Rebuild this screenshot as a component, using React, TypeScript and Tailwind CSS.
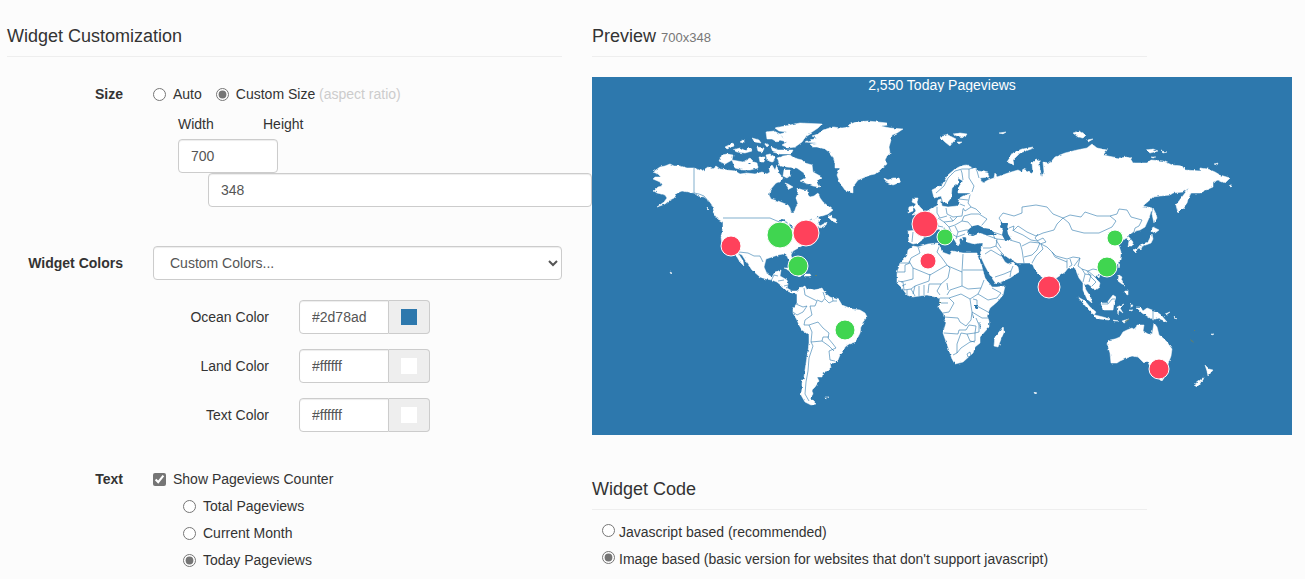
import React from "react";

/* Coastlines, in map units */
const LAND = [
  // North and Central America
  "M653 172L660 167L665 166L670 164L674 166L680 166L687 168L694 168L702 171L708 167L712 169L716 166L720 169L727 170L735 171L740 174L747 173L755 174L762 172L767 174L770 172L769 168L772 165L775 170L777 165L778 172L783 178L780 182L776 183L770 190L769 195L771 199L778 201L788 205L790 208L791 213L794 213L796 207L798 204L796 198L798 193L797 188L803 190L807 190L808 195L810 197L814 196L818 193L820 198L823 202L828 206L833 210L828 214L822 216L817 217L810 222L816 218L821 219L818 222L820 226L827 222L826 225L820 228L817 226L815 233L807 243L800 247L793 251L791 255L793 262L790 263L787 256L783 254L778 255L772 257L766 259L764 267L767 274L772 277L775 272L781 270L780 276L787 280L788 284L787 288L792 291L797 291L800 288L802 292L797 294L792 293L787 291L783 287L777 282L772 280L766 279L760 277L752 270L747 263L742 255L738 253L743 261L744 266L740 262L737 257L733 253L725 250L722 245L721 238L723 227L723 222L718 219L715 215L712 205L708 200L704 197L698 196L694 193L688 192L682 191L677 193L674 198L670 200L665 204L657 207L664 202L667 198L665 195L657 193L654 191L658 187L662 186L660 182L653 179L655 177L661 177L658 174Z",
  // South America
  "M797 294L801 288L805 286L807 290L810 288L814 290L822 288L825 293L830 297L839 300L842 305L852 309L860 310L865 313L867 317L863 322L861 327L860 333L858 337L855 342L849 344L845 347L843 352L840 355L838 360L835 363L830 363L831 368L828 371L823 372L822 377L817 377L819 381L817 384L815 387L812 390L813 394L811 397L812 400L816 404L811 405L805 402L801 395L802 389L802 383L804 377L805 370L807 357L809 343L809 335L802 330L799 325L797 320L793 313L793 309L797 303Z",
  // Greenland
  "M805 142L811 140L817 138L812 136L818 134L823 130L833 127L842 128L850 127L848 125L856 122L867 121L878 122L887 123L888 125L880 126L890 128L903 129L897 133L892 135L891 140L889 147L890 153L887 156L885 160L887 164L883 167L880 170L875 174L870 175L863 178L858 180L855 184L853 187L853 193L848 191L845 190L840 183L837 175L840 168L835 168L835 163L833 157L829 152L825 149L818 147L813 147L810 144L817 143Z",
  // Canadian Arctic
  "M775 128L790 125L800 123L822 124L818 128L812 132L807 135L802 142L795 147L788 148L782 145L787 142L780 140L783 137L780 134L787 132L779 131Z",
  "M766 132L774 131L780 134L783 138L777 142L772 139L767 139Z",
  "M771 147L778 150L793 150L791 154L780 154L773 152Z",
  "M777 158L783 156L790 155L794 158L802 160L805 163L812 165L813 172L822 177L817 181L820 187L813 186L808 184L800 181L805 178L804 173L797 168L787 167L780 166Z",
  "M784 170L790 170L791 175L787 178L783 176Z M785 183L788 184L793 187L789 189Z M766 155L770 154L775 157L773 162L767 160Z",
  "M722 155L727 154L733 155L732 160L725 164L719 161Z M732 160L743 162L750 158L754 162L757 163L758 168L750 170L743 170L735 168Z M733 150L740 148L746 151L749 147L752 151L745 153L737 152Z M725 147L733 143L734 146L727 149Z M740 142L743 140L743 143Z M752 138L759 140L761 143L755 142Z M757 147L764 148L763 152L758 151Z M759 157L765 157L764 162L760 162Z M764 143L769 145L767 147Z",
  "M828 217L831 215L832 218L836 219L837 223L832 221Z M713 212L718 215L723 220L718 219Z M707 207L709 209L708 210Z",
  // Caribbean and the Falklands
  "M784 268L791 268L797 271L801 273L794 272Z M804 274L810 274L811 276L805 276Z M798 276L801 276L799 277Z M825 397L829 397L826 399Z",
  // Iceland, Svalbard, Arctic islands
  "M884 178L888 180L893 178L899 178L901 182L893 185L886 182Z M940 137L948 135L956 139L953 142L950 146L945 142Z M953 134L960 133L967 134L965 137L957 136Z M957 142L962 142L959 144Z M999 133L1006 132L1003 134Z",
  "M1033 147L1022 149L1013 153L1007 162L1014 165L1013 160L1020 153L1034 148Z M1073 133L1080 131L1086 135L1083 138L1078 137Z M1086 140L1093 139L1088 142Z M1146 150L1153 149L1158 151L1150 153Z M1161 151L1167 152L1163 153Z M1151 157L1156 157L1153 158Z M1214 164L1218 163L1217 165Z M1229 185L1232 185L1231 186Z",
  // Great Britain and Ireland
  "M913 198L918 198L917 203L920 207L924 211L920 214L912 215L916 211L914 207L916 204L912 202Z M909 207L913 206L913 211L908 213Z",
  // Europe and Asia
  "M932 190L942 185L948 175L955 169L961 166L967 165L973 168L979 171L988 173L989 177L980 178L983 183L988 180L994 178L995 173L997 177L1008 173L1018 170L1022 172L1023 169L1033 173L1032 163L1036 159L1039 160L1040 170L1042 177L1044 172L1043 162L1050 163L1055 157L1065 153L1077 150L1087 148L1092 144L1097 148L1107 150L1103 155L1113 157L1120 158L1127 157L1130 158L1133 163L1140 163L1147 163L1151 160L1163 161L1172 165L1182 166L1185 170L1200 171L1200 168L1208 169L1215 172L1220 175L1230 178L1225 183L1218 180L1213 182L1213 187L1206 190L1200 193L1191 193L1188 199L1187 203L1183 208L1178 213L1176 205L1182 197L1189 188L1183 192L1173 193L1170 195L1160 196L1153 197L1143 206L1152 208L1149 218L1145 227L1140 230L1135 231L1128 236L1133 242L1132 246L1128 246L1129 241L1127 238L1122 240L1117 242L1119 246L1121 252L1120 260L1115 267L1107 273L1099 273L1095 277L1100 283L1099 287L1095 290L1092 287L1088 284L1084 285L1086 290L1090 296L1092 303L1087 299L1083 290L1083 283L1079 278L1075 268L1068 268L1065 272L1055 279L1054 288L1053 293L1048 297L1043 285L1041 276L1035 270L1032 263L1025 263L1017 263L1010 259L1004 255L1000 254L1005 262L1008 264L1013 262L1018 267L1019 272L1010 278L996 284L990 275L985 266L980 255L982 249L983 243L980 243L974 244L967 242L966 237L962 237L963 240L959 239L960 243L958 246L954 239L948 233L944 227L943 230L948 235L953 238L950 241L948 238L943 234L939 229L936 230L930 231L923 235L922 240L918 243L913 244L909 242L908 231L918 230L919 225L914 218L924 213L932 208L937 206L938 200L941 199L942 206L948 207L957 206L960 202L958 199L963 196L972 193L958 193L958 188L963 181L958 178L958 183L952 188L951 198L947 203L943 202L941 196L934 198Z",
  // Africa and Madagascar
  "M913 246L918 247L928 244L938 243L940 247L942 252L950 255L952 251L963 253L977 253L978 257L982 267L985 278L992 287L997 287L1005 286L1003 295L997 302L990 308L987 315L989 321L989 327L980 337L980 343L975 347L973 353L963 362L955 364L952 359L948 347L943 333L946 323L943 313L939 308L940 298L935 297L927 295L912 297L907 295L902 288L897 283L897 273L900 263L907 256L908 250Z M1003 327L1004 332L1001 339L998 347L994 346L995 337Z",
  // Japan, Sakhalin, Taiwan, Philippines
  "M1153 227L1159 230L1155 233L1151 231Z M1152 234L1153 239L1151 243L1143 246L1137 249L1140 245L1148 242Z M1134 249L1137 249L1136 253L1133 250Z M1139 248L1142 247L1141 249Z M1153 208L1156 214L1157 218L1154 223L1152 214Z M1118 264L1120 264L1119 268Z M1119 275L1122 277L1121 281L1125 285L1122 284L1118 281Z M1125 291L1128 291L1128 295L1124 293Z M1097 276L1100 275L1099 278Z",
  // Southeast Asia
  "M1078 297L1085 301L1090 307L1096 312L1094 315L1088 309L1083 303Z M1095 315L1103 317L1110 319L1109 320L1100 319L1095 317Z M1101 303L1107 303L1109 300L1113 295L1116 297L1114 303L1113 310L1103 310Z M1117 307L1124 304L1120 308L1123 313L1119 310L1118 314Z M1113 320L1119 321L1114 321Z M1122 321L1129 319L1124 323Z M1131 303L1133 306L1131 307Z M1136 307L1140 307L1143 311L1147 308L1157 312L1161 315L1167 322L1158 318L1153 320L1147 316L1142 313Z M1165 314L1170 312L1166 315Z M1174 316L1177 319L1175 318Z M1129 310L1133 310L1130 311Z",
  // Australia and New Zealand
  "M1107 343L1110 340L1115 339L1120 337L1123 332L1127 330L1132 328L1135 330L1137 325L1144 325L1143 331L1148 334L1152 335L1154 323L1157 327L1159 335L1163 338L1167 342L1172 349L1171 356L1168 364L1163 374L1156 372L1151 369L1147 360L1144 363L1138 357L1132 356L1127 358L1120 361L1117 363L1111 363L1110 353Z M1159 378L1164 378L1162 381L1160 380Z M1205 365L1209 369L1213 370L1208 376L1207 371Z M1204 377L1203 380L1197 387L1194 385L1199 381Z",
  "M1211 334L1214 334L1212 335Z M670 272L672 273L671 274Z M1034 392L1037 393L1035 394Z",
];

/* Lakes and inland seas */
const WATER = [
  "M968 235L969 229L973 226L978 225L984 228L990 229L997 235L987 235L980 233L973 236Z",
  "M1001 223L1008 223L1007 229L1008 234L1011 239L1006 242L1002 235L1003 230L1000 227Z",
  "M777 221L783 219L788 223L784 222Z M785 224L787 224L786 230L784 229Z M789 223L793 227L791 228Z M794 230L799 228L797 230Z",
  "M974 305L978 305L978 309L974 308Z M972 311L974 318L973 318Z M979 321L981 327L980 328Z",
  "M790 171L793 174L790 175Z M748 163L752 163L750 165Z",
];

/* Country borders */
const BORDERS = [
  "M694 168V193L699 194L704 196L709 202L713 208 M723 218H770L777 221L788 225L794 229L803 224L812 219",
  "M739 252L748 253L754 256L760 256L763 262 M771 281L774 275L778 276 M778 281L784 280 M784 286L788 285",
  "M804 288L805 295L811 298L817 301L815 306L810 306L812 315L805 320 M796 304L803 307L807 306L803 312L797 315L793 312 M805 320L804 325L809 325L818 322L823 328L829 333L828 338L833 344L836 348L829 351L830 360L835 361 M809 325L812 332L811 342L822 341L823 337L829 337 M811 342L813 346L809 358L808 371L806 382L805 394L809 401 M822 341L829 346L834 351 M817 300L822 302L825 298L823 292 M825 299L829 303L833 301L832 296 M833 301L837 301",
  // Europe
  "M936 193L944 186L948 178L955 171L962 169L969 169L973 168 M963 180L962 173L961 170 M969 169L969 178L974 186L972 192 M977 171L979 178 M959 199L968 200 M960 204L965 206 M970 195L968 203L971 207L965 211L963 208 M946 208L947 214L953 217L962 216L963 209 M937 207L937 213L940 218L947 216 M938 218L944 222L953 221L957 217 M944 222L949 227L955 225L962 221L968 222L973 228 M955 226L958 232L966 230L970 230 M958 232L956 239 M962 221L964 216L971 214L979 214L987 219L982 225 M971 207L976 209L981 214 M949 227L952 234L957 237L965 234 M913 232L912 242 M919 230L926 233 M937 219L938 226L943 227 M953 221L950 217",
  // Middle East
  "M986 235L997 239L1007 240 M990 231L1002 235 M993 234L995 239 M997 239L996 246L990 248L983 248 M996 246L1001 252L1004 255 M985 254L991 250L1001 256 M996 240L1001 248 M995 277L1004 274L1011 271L1010 277 M1011 271L1013 266",
  // Central and South Asia
  "M1002 223L999 218L1003 213L1014 216L1022 213L1022 207L1036 205L1047 207L1053 214L1063 218L1057 224L1054 230L1043 233L1036 236L1027 232L1018 226L1013 231L1014 226L1009 228 M1014 231L1023 235L1031 240L1037 241L1043 238L1046 242L1040 244L1035 238L1038 234 M1010 240L1020 243L1022 250L1024 263 M1022 246L1030 242L1040 243L1037 250L1032 255L1024 257 M1032 263L1036 256L1043 249L1041 244L1047 247L1052 252L1056 256L1067 259L1073 257L1080 258L1078 266L1082 269L1088 271L1093 269L1098 270 M1052 252L1055 257L1067 262 M1067 260L1067 268 M1070 259L1072 265L1069 267 M1080 258L1074 266 M1082 269L1085 274L1083 282 M1087 271L1091 277L1096 282L1092 286 M1085 274L1091 275L1089 282 M1088 271L1094 276L1099 281",
  // Russia, Mongolia and China
  "M1063 218L1070 215L1081 217L1085 212L1097 216L1110 216L1116 221L1112 227L1099 233L1084 233L1072 230L1069 223Z M1110 216L1117 214L1119 209L1127 210L1131 217L1142 220L1139 226L1135 228L1134 232L1127 237 M1131 239L1129 241",
  // Africa
  "M918 247L920 253L911 258L909 263L900 263 M909 261L913 268L930 275L947 265L942 258L937 252L939 247 M897 272H905V265L910 263 M913 268V279L901 282 M930 274L929 281L915 286L913 294 M947 265L950 268L948 278L941 284H929L928 293 M948 266L962 272L963 254 M963 270H985 M962 272V286L950 290L947 295 M941 284L937 291L940 295 M947 283L948 290 M962 286L968 289L981 288L984 280 M981 288L978 294L988 300L997 298L1001 293L992 288 M978 294L970 299L961 294L949 298L940 298 M970 299L972 312L971 320L966 326L960 322L958 318L944 317 M949 298L954 303L949 312L943 313 M973 299L977 300V306L988 312 M972 312L982 318L989 318 M976 318L979 325V332L975 333L976 326L969 325L966 330L959 330L958 334L944 333 M961 333L967 334L975 333L975 341L970 342L961 348L957 353L957 344L961 333 M967 334L970 341L975 342 M957 353L953 355 M898 281L903 282L904 290L911 289L915 286 M907 290V295 M911 289L915 296 M919 286V296 M924 285V295 M902 286L906 284 M967 354L970 352L971 356L968 357Z M941 303H948",
  // New Guinea and Borneo
  "M1153 310V320 M1102 304L1108 304L1112 299L1115 299",
];

type Spot = { x: number; y: number; r: number; color: string };

const GREEN = "#40d550";
const RED = "#ff415b";

const SPOTS: Spot[] = [
  { x: 780, y: 235, r: 13, color: GREEN },
  { x: 806, y: 233, r: 13, color: RED },
  { x: 731, y: 246, r: 10, color: RED },
  { x: 798, y: 266, r: 10, color: GREEN },
  { x: 845, y: 330, r: 10, color: GREEN },
  { x: 925, y: 224, r: 13, color: RED },
  { x: 945, y: 237, r: 8, color: GREEN },
  { x: 928, y: 261, r: 8, color: RED },
  { x: 1049, y: 287, r: 11, color: RED },
  { x: 1107, y: 267, r: 10, color: GREEN },
  { x: 1115, y: 238, r: 8, color: GREEN },
  { x: 1159, y: 369, r: 10, color: RED },
];

function WorldMap() {
  return (
    <svg viewBox="592 92 700 343" className="block w-full" role="img" aria-label="World map of visitors">
      <defs>
        <filter id="coast" x="0" y="0" width="100%" height="100%" colorInterpolationFilters="sRGB">
          <feTurbulence type="fractalNoise" baseFrequency="0.3" numOctaves="1" seed="4" result="noise" />
          <feDisplacementMap in="SourceGraphic" in2="noise" scale="3" xChannelSelector="R" yChannelSelector="G" />
        </filter>
      </defs>
      <g filter="url(#coast)">
        <rect x="592" y="92" width="700" height="343" fill="none" />
        <path d={LAND.join(" ")} fill="#ffffff" stroke="#ffffff" strokeWidth="0.5" strokeLinejoin="round" />
        <path d={WATER.join(" ")} fill="#2d78ad" />
      </g>
      <path d={BORDERS.join(" ")} fill="none" stroke="#2d78ad" strokeWidth="0.6" strokeLinejoin="round" />
      <path
        d="M1125 321l4-2v1l-3 2zM1190 339l3 2 1 2-3-2zM1194 330h1v1h-1zM815 275h2v1h-2zM939 302h2v1h-2z"
        fill="#5f7f70"
      />
      {SPOTS.map((s) => (
        <circle key={`${s.x}-${s.y}`} cx={s.x} cy={s.y} r={s.r} fill={s.color} stroke="#ffffff" strokeWidth="1" />
      ))}
    </svg>
  );
}

const headingClass = "border-b border-[#eeeeee] pb-[10px] text-lg leading-5";
const inputClass =
  "block h-[34px] border border-[#cccccc] bg-white px-3 text-sm text-[#555555] shadow-[inset_0_1px_1px_rgba(0,0,0,0.075)] outline-none";
const tickClass = "m-0 size-[13px] shrink-0 accent-[#757575]";

function ColorRow({ id, label, value, swatch }: { id: string; label: string; value: string; swatch: string }) {
  return (
    <div className="flex items-center gap-[30px]">
      <label htmlFor={id} className="w-[116px] text-right">
        {label}
      </label>
      <div className="flex">
        <input id={id} defaultValue={value} className={`${inputClass} w-[90px] rounded-l`} />
        <button
          type="button"
          aria-label={`Pick ${label}`}
          className="flex h-[34px] w-[41px] items-center justify-center rounded-r border border-l-0 border-[#cccccc] bg-[#eeeeee]"
        >
          <span className={`block size-4 ${swatch}`} />
        </button>
      </div>
    </div>
  );
}

function Choice({ name, label, checked = false }: { name: string; label: string; checked?: boolean }) {
  return (
    <label className="flex items-center gap-[7px]">
      <input type="radio" name={name} defaultChecked={checked} className={tickClass} />
      <span>{label}</span>
    </label>
  );
}

export default function App() {
  return (
    <main className="min-h-screen overflow-hidden bg-[#fcfcfc] pt-[26px] pl-[7px] font-['Liberation_Sans',Arial,sans-serif] text-sm leading-5 text-[#333333]">
      <div className="grid max-w-[1140px] grid-cols-2 gap-[30px]">
        <section className="min-w-0">
          <h2 className={headingClass}>Widget Customization</h2>
          <form className="pt-[27px]">
            <div className="grid grid-cols-[116px_minmax(0,1fr)] gap-x-[30px]">
              <span className="text-right font-bold">Size</span>
              <div>
                <div className="flex gap-[14px]">
                  <Choice name="size" label="Auto" />
                  <label className="flex items-center gap-[7px]">
                    <input type="radio" name="size" defaultChecked className={tickClass} />
                    <span>
                      Custom Size <span className="text-[#cccccc]">(aspect ratio)</span>
                    </span>
                  </label>
                </div>
                <div className="mt-[10px] flex pl-[25px]">
                  <label htmlFor="width" className="w-[85px]">
                    Width
                  </label>
                  <label htmlFor="height">Height</label>
                </div>
                <div className="mt-[5px] -mr-[30px] pl-[25px]">
                  <input id="width" defaultValue="700" className={`${inputClass} w-[100px] rounded`} />
                  <div className="pl-[30px]">
                    <input id="height" defaultValue="348" className={`${inputClass} w-full rounded`} />
                  </div>
                </div>
              </div>
            </div>

            <div className="mt-[39px] grid grid-cols-[116px_minmax(0,1fr)] items-center gap-x-[30px]">
              <label htmlFor="colors" className="text-right font-bold">
                Widget Colors
              </label>
              <select id="colors" className={`${inputClass} w-full rounded`}>
                <option>Custom Colors...</option>
              </select>
            </div>

            <div className="mt-5 flex flex-col gap-[15px] pl-[146px]">
              <ColorRow id="ocean" label="Ocean Color" value="#2d78ad" swatch="bg-[#2d78ad]" />
              <ColorRow id="land" label="Land Color" value="#ffffff" swatch="bg-white" />
              <ColorRow id="text" label="Text Color" value="#ffffff" swatch="bg-white" />
            </div>

            <div className="mt-[37px] grid grid-cols-[116px_minmax(0,1fr)] gap-x-[30px]">
              <span className="text-right font-bold">Text</span>
              <div className="flex flex-col gap-[7px]">
                <label className="flex items-center gap-[7px]">
                  <input type="checkbox" defaultChecked className={tickClass} />
                  <span>Show Pageviews Counter</span>
                </label>
                <div className="flex flex-col gap-[7px] pl-[30px]">
                  <Choice name="counter" label="Total Pageviews" />
                  <Choice name="counter" label="Current Month" />
                  <Choice name="counter" label="Today Pageviews" checked />
                </div>
              </div>
            </div>
          </form>
        </section>

        <section className="min-w-0">
          <h2 className={headingClass}>
            Preview <small className="text-[13px] leading-none text-[#777777]">700x348</small>
          </h2>
          <div className="mt-5 w-[700px] bg-[#2d78ad]">
            <p className="h-[15px] overflow-hidden text-center leading-4 text-white">2,550 Today Pageviews</p>
            <WorldMap />
          </div>
          <h2 className={`mt-[44px] ${headingClass}`}>Widget Code</h2>
          <div className="mt-3 flex flex-col gap-[7px] pl-[10px]">
            <label className="flex gap-1">
              <input type="radio" name="code" className="mt-[2px] size-[13px] shrink-0 accent-[#757575]" />
              <span>Javascript based (recommended)</span>
            </label>
            <label className="flex gap-1">
              <input type="radio" name="code" defaultChecked className="mt-[2px] size-[13px] shrink-0 accent-[#757575]" />
              <span>Image based (basic version for websites that don't support javascript)</span>
            </label>
          </div>
        </section>
      </div>
    </main>
  );
}
